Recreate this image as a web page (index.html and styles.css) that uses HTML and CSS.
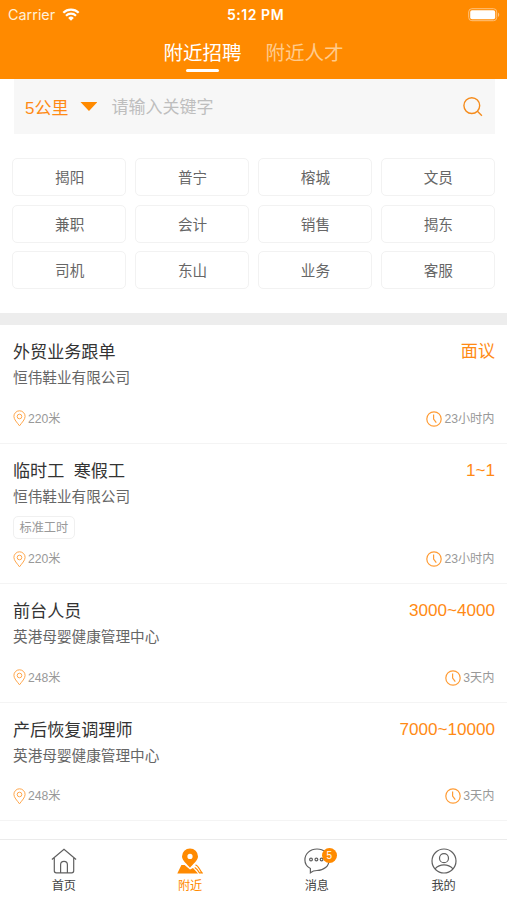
FILE: index.html
```html
<!DOCTYPE html>
<html lang="zh-CN">
<head>
<meta charset="utf-8">
<title>附近招聘</title>
<link rel="stylesheet" href="styles.css">
</head>
<body>
<svg class="defs" width="0" height="0">
  <symbol id="pin" viewBox="0 0 13 17"><path d="M6.5 15.8C4 12.4.9 9.5.9 6.4a5.6 5.6 0 0 1 11.2 0c0 3.1-3.1 6-5.600 9.400z"/><circle cx="6.500" cy="6.500" r="2.300"/></symbol>
  <symbol id="clock" viewBox="0 0 16 16"><circle cx="8" cy="8" r="7.200"/><path d="M7.600 3.500V8l2.700 3.600"/></symbol>
</svg>
<div class="app">
  <header class="header">
    <div class="status">
      <div class="carrier">Carrier
        <svg class="wifi" width="18" height="13" viewBox="0 0 18 13"><path d="M1.300 4.700a11 11 0 0 1 15.400 0M4 7.700a7.200 7.200 0 0 1 10 0"/><path class="dot" d="M6.200 9.900a4.100 4.100 0 0 1 5.600 0L9 12.700z"/></svg>
      </div>
      <div class="time">5:12 PM</div>
      <svg class="battery" width="32" height="14" viewBox="0 0 32 14"><rect class="shell" x=".7" y=".7" width="28" height="12" rx="3.200"/><rect class="charge" x="2.200" y="2.200" width="25" height="9" rx="1.800"/><path class="cap" d="M30 4.600c1.700.8 1.700 3.600 0 4.400z"/></svg>
    </div>
    <nav class="tabs"><div class="tab active">附近招聘</div><div class="tab">附近人才</div></nav>
  </header>
  <section class="search">
    <span class="range">5公里</span><span class="caret"></span><span class="placeholder">请输入关键字</span>
    <svg class="lens" width="20" height="20" viewBox="0 0 20 20"><circle cx="8.800" cy="8.600" r="7.900"/><path d="M14.400 14.300l4.500 4.400"/></svg>
  </section>
  <section class="chips">
    <span class="chip">揭阳</span><span class="chip">普宁</span><span class="chip">榕城</span><span class="chip">文员</span>
    <span class="chip">兼职</span><span class="chip">会计</span><span class="chip">销售</span><span class="chip">揭东</span>
    <span class="chip">司机</span><span class="chip">东山</span><span class="chip">业务</span><span class="chip">客服</span>
  </section>
  <main class="jobs">
    <article class="job">
      <div class="top"><h2>外贸业务跟单</h2><span class="pay">面议</span></div>
      <div class="company">恒伟鞋业有限公司</div>
      <div class="meta"><span class="info"><svg class="pin"><use href="#pin"/></svg>220米</span><span class="info"><svg class="clock"><use href="#clock"/></svg>23小时内</span></div>
    </article>
    <article class="job tagged">
      <div class="top"><h2>临时工&nbsp; 寒假工</h2><span class="pay">1~1</span></div>
      <div class="company">恒伟鞋业有限公司</div>
      <div class="tag">标准工时</div>
      <div class="meta"><span class="info"><svg class="pin"><use href="#pin"/></svg>220米</span><span class="info"><svg class="clock"><use href="#clock"/></svg>23小时内</span></div>
    </article>
    <article class="job">
      <div class="top"><h2>前台人员</h2><span class="pay">3000~4000</span></div>
      <div class="company">英港母婴健康管理中心</div>
      <div class="meta"><span class="info"><svg class="pin"><use href="#pin"/></svg>248米</span><span class="info"><svg class="clock"><use href="#clock"/></svg>3天内</span></div>
    </article>
    <article class="job">
      <div class="top"><h2>产后恢复调理师</h2><span class="pay">7000~10000</span></div>
      <div class="company">英港母婴健康管理中心</div>
      <div class="meta"><span class="info"><svg class="pin"><use href="#pin"/></svg>248米</span><span class="info"><svg class="clock"><use href="#clock"/></svg>3天内</span></div>
    </article>
  </main>
  <nav class="bottom">
    <div class="item"><svg width="26" height="26" viewBox="0 0 26 26"><path d="M.9 11.500L13 1.200l12.100 10.300M3.300 9.600v13.200q0 2 2 2h15.400q2 0 2-2V9.600M9.600 24.800v-8q0-3.400 3.400-3.400t3.400 3.400v8"/></svg>首页</div>
    <div class="item current"><svg width="26" height="26" viewBox="0 0 26 26"><path class="solid" fill-rule="evenodd" d="M13 .4a8 8 0 0 0-8 8c0 4.400 5.500 7.700 8 11.400 2.500-3.700 8-7 8-11.400a8 8 0 0 0-8-8zm0 5.400a2.600 2.600 0 1 1 0 5.200 2.600 2.600 0 0 1 0-5.200z"/><path class="solid" d="M4.400 17h3.200l5.400 4.500 3-1.600 5 5.600H.3z"/><path d="M18.400 17c3.200.2 3.700 4.500 6.700 7.900h-2.600c-1.300-2.500-2.600-4-4.800-5.300"/></svg>附近</div>
    <div class="item"><span class="chat"><svg width="26" height="26" viewBox="0 0 26 26"><path d="M6.400 24.800v-4.300C2.900 18.600.9 15.500.9 11.900.9 5.700 6.200 1 13 1s12.100 4.700 12.100 10.900-5.300 10.600-12.100 10.600q-3.800 0-6.600 2.300z"/><circle cx="7" cy="11.500" r="1.400"/><circle cx="12.400" cy="11.500" r="1.400"/><circle cx="17.600" cy="11.500" r="1.400"/></svg><span class="badge">5</span></span>消息</div>
    <div class="item"><svg width="26" height="26" viewBox="0 0 26 26"><circle cx="13" cy="13" r="12"/><circle cx="13" cy="10.200" r="4.500"/><path d="M4 20.800c5-5.200 13-5.200 18 0"/></svg>我的</div>
  </nav>
</div>
</body>
</html>
```
FILE: styles.css
```css
* { box-sizing: border-box; }
body { margin: 0; background: #fff; font-family: "Liberation Sans", "Noto Sans CJK SC", sans-serif; }
svg { display: block; fill: none; stroke: currentColor; flex: none; }
.defs { position: absolute; }
.app { width: 507px; height: 900px; display: flex; flex-direction: column; overflow: hidden; }
.header { height: 79px; flex: none; background: #ff8a00; color: #fff; }
.status { height: 27px; padding: 0 7px 0 8px; display: grid; grid-template-columns: 1fr auto 1fr; align-items: center; font: 14.4px/27px Inter, sans-serif; }
.carrier { display: flex; align-items: center; gap: 7px; color: #fff0d8; line-height: 29px; }
.wifi { stroke-width: 2.2; color: #fff; }
.wifi .dot { fill: currentColor; stroke: none; }
.time { font-weight: 600; font-size: 14px; letter-spacing: .55px; padding-left: 3px; }
.battery { justify-self: end; stroke: none; }
.battery .shell { stroke: #ffc27c; }
.battery .charge { fill: #fff; }
.battery .cap { fill: #ffc27c; }
.tabs { display: flex; justify-content: center; gap: 24px; font-size: 19.5px; line-height: 52px; }
.tab { height: 46px; color: #ffcb8c; }
.tab.active { color: #fff; display: flex; flex-direction: column; align-items: center; }
.tab.active::after { content: ""; width: 33px; height: 3px; flex: none; margin-top: -10px; border-radius: 2px; background: #fff; }
.search { height: 55px; flex: none; margin: 0 12px 0 14px; padding: 0 12px 0 11px; background: #f7f7f7; display: flex; align-items: center; font-size: 17px; }
.range { color: #ff8a14; }
.caret { width: 17px; height: 9px; margin: 0 14px 0 12px; background: #ff8a00; clip-path: polygon(0 0, 100% 0, 50% 100%); }
.placeholder { color: #bebebe; padding-bottom: 2px; }
.lens { margin-left: auto; color: #f58b1b; stroke-width: 1.4; }
.chips { margin: 24px 12px 0; flex: none; display: grid; grid-template-columns: repeat(4, 1fr); grid-auto-rows: 38px; gap: 8.5px; height: 155px; }
.chip { border: 1px solid #f2f2f2; border-radius: 5px; text-align: center; line-height: 38px; padding-left: 1px; font-size: 14.6px; color: #666; }
.jobs { border-top: 12px solid #ededed; flex: 1; min-height: 0; }
.job { height: 118.5px; padding: 13px 12px 0 13px; border-bottom: 1px solid #f4f4f4; display: flex; flex-direction: column; }
.job.tagged { height: 140.5px; }
.top { display: flex; justify-content: space-between; height: 27px; line-height: 29px; font-size: 17.1px; }
h2 { margin: 0; font-size: 17.1px; font-weight: 400; color: #333; }
.pay { color: #ff8a14; line-height: 28px; }
.company { height: 25px; line-height: 27px; font-size: 14.65px; color: #666; }
.tag { align-self: flex-start; height: 23px; margin-top: 7px; padding: 0 5.5px; border: 1px solid #f0f0f0; border-radius: 5px; font-size: 12.2px; line-height: 22px; color: #999; }
.meta { display: flex; justify-content: space-between; height: 18px; margin: auto 0 15px; font-size: 12.2px; line-height: 18px; color: #999; }
.info { display: flex; align-items: center; gap: 2px; }
.info:last-child { padding-right: .5px; }
.pin { width: 13px; height: 17px; color: #ffa64a; }
.clock { width: 16px; height: 16px; color: #ff9c35; stroke-width: 1.2; }
.bottom { height: 61px; flex: none; border-top: 1px solid #ebebeb; display: grid; grid-template-columns: repeat(4, 1fr); background: #fff; }
.item { display: flex; flex-direction: column; align-items: center; padding-top: 8px; font-size: 12.2px; line-height: 20px; color: #444; }
.item:first-child { padding-left: 1px; }
.item svg { stroke-width: 1.2; margin-bottom: 2px; }
.item:not(.current) svg { stroke: #606060; }
.item.current { color: #ff8a00; }
.solid { fill: currentColor; stroke: none; }
.chat { position: relative; }
.badge { position: absolute; left: 18px; top: 0; width: 15px; height: 15px; border-radius: 50%; background: #ff8a00; color: #fff; font-size: 10px; line-height: 15px; text-align: center; }
```
